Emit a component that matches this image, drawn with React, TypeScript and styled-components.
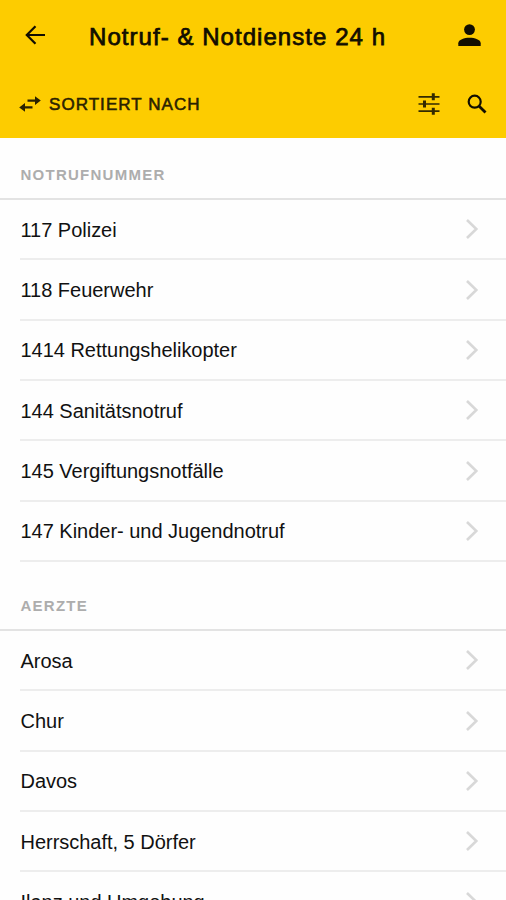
import React from "react";
import styled, { createGlobalStyle } from "styled-components";

const GlobalStyle = createGlobalStyle`
  * { box-sizing: border-box; }
  body {
    margin: 0;
    background: #fefefe;
    color: #111;
    font-family: "Liberation Sans", Arial, sans-serif;
  }
`;

const Screen = styled.div`
  width: 506px;
  height: 900px;
  overflow: hidden;
  background: #fefefe;
`;

const Header = styled.header`
  height: 137.5px;
  background: #fdcc00;
  color: #120e00;
`;

const TitleBar = styled.div`
  display: flex;
  align-items: center;
  height: 72px;
  padding: 0 25px 0 25px;
`;

const Title = styled.h1`
  flex: 1;
  margin: 0 0 0 44px;
  padding-top: 1px;
  font-size: 24px;
  font-weight: 400;
  line-height: 28px;
  letter-spacing: 1.05px;
  white-space: nowrap;
  -webkit-text-stroke: 0.75px currentColor;
`;

const ToolBar = styled.div`
  display: flex;
  align-items: center;
  height: 64px;
  padding: 0 19px 0 19px;
`;

const SortButton = styled.button`
  display: flex;
  align-items: center;
  gap: 8px;
  margin-right: auto;
  padding: 0;
  border: 0;
  background: none;
  color: #2a2200;
  font: 400 17px/20px "Liberation Sans", Arial, sans-serif;
  letter-spacing: 1.05px;
  -webkit-text-stroke: 0.55px currentColor;
`;

const SortLabel = styled.span`
  padding-top: 1px;
`;

const IconButton = styled.button<{ $gap?: number }>`
  display: flex;
  margin: 0 0 0 ${(p) => p.$gap ?? 0}px;
  padding: 0;
  border: 0;
  background: none;
  color: inherit;
`;

const Icon = styled.svg`
  display: block;
  overflow: visible;
`;

const SectionTitle = styled.h2<{ $height: number }>`
  display: flex;
  align-items: flex-end;
  height: ${(p) => p.$height}px;
  margin: 0;
  padding: 0 20px 15px 20.5px;
  border-bottom: 2px solid #e3e3e3;
  color: #adadad;
  font-size: 15px;
  font-weight: 700;
  line-height: 17px;
  letter-spacing: 1.25px;
`;

const List = styled.ul`
  margin: 0 0 0 20px;
  padding: 0;
  list-style: none;
`;

const Row = styled.li`
  display: flex;
  align-items: center;
  justify-content: space-between;
  height: 60.35px;
  padding-right: 28px;
  border-bottom: 2px solid #ededed;
  font-size: 20px;
  line-height: 24px;
`;

const RowLabel = styled.span`
  padding: 1px 0 0 0.5px;
  letter-spacing: -0.02px;
`;

const Chevron = () => (
  <Icon width="12" height="20" viewBox="0 0 12 20" fill="none" stroke="#d8d8d8" strokeWidth="2.6">
    <path d="M1 1 10.3 10 1 19" />
  </Icon>
);

const sections = [
  {
    title: "NOTRUFNUMMER",
    height: 62.5,
    rows: [
      "117 Polizei",
      "118 Feuerwehr",
      "1414 Rettungshelikopter",
      "144 Sanitätsnotruf",
      "145 Vergiftungsnotfälle",
      "147 Kinder- und Jugendnotruf",
    ],
  },
  {
    title: "AERZTE",
    height: 69,
    rows: ["Arosa", "Chur", "Davos", "Herrschaft, 5 Dörfer", "Ilanz und Umgebung"],
  },
];

export default function App() {
  return (
    <Screen>
      <GlobalStyle />
      <Header>
        <TitleBar>
          <IconButton aria-label="Zurück">
            <Icon width="20" height="20" viewBox="0 0 20 20" fill="none" stroke="currentColor" strokeWidth="2.2">
              <path d="M20 9H2M10.5.3 1.8 9l8.7 8.7" />
            </Icon>
          </IconButton>
          <Title>Notruf- &amp; Notdienste 24 h</Title>
          <IconButton aria-label="Profil">
            <Icon width="23" height="24" viewBox="0 0 23 24" fill="currentColor">
              <circle cx="11.5" cy="5.6" r="5.4" />
              <path d="M.3 22v-2.8c0-3.5 6-5.4 11.2-5.4s11.2 1.9 11.2 5.4V22z" />
            </Icon>
          </IconButton>
        </TitleBar>
        <ToolBar>
          <SortButton>
            <Icon width="22" height="16" viewBox="0 0 22 16" fill="currentColor">
              <path d="M8.5 3.6H16V.2l5.8 4.4L16 9V5.8H8.5zM13.5 10.2H6V7L.2 11.4 6 15.8v-3.4h7.5z" />
            </Icon>
            <SortLabel>SORTIERT NACH</SortLabel>
          </SortButton>
          <IconButton aria-label="Filter">
            <Icon width="22" height="22" viewBox="0 0 22 22" fill="none" stroke="#332a00">
              <path strokeWidth="1.7" d="M.5 3.8h21M.5 11h21M.5 18.2h21" />
              <path strokeWidth="3" d="M15.3.3v7M6.5 7.5v7M15.3 14.7v7" />
            </Icon>
          </IconButton>
          <IconButton aria-label="Suche" $gap={27}>
            <Icon width="20" height="20" viewBox="0 0 20 20" fill="none" stroke="currentColor" strokeWidth="2.2">
              <circle cx="7.7" cy="7.7" r="6" />
              <path strokeWidth="2.8" d="m12.2 12.2 6.3 6.3" />
            </Icon>
          </IconButton>
        </ToolBar>
      </Header>
      {sections.map((section) => (
        <section key={section.title}>
          <SectionTitle $height={section.height}>{section.title}</SectionTitle>
          <List>
            {section.rows.map((row) => (
              <Row key={row}>
                <RowLabel>{row}</RowLabel>
                <Chevron />
              </Row>
            ))}
          </List>
        </section>
      ))}
    </Screen>
  );
}
